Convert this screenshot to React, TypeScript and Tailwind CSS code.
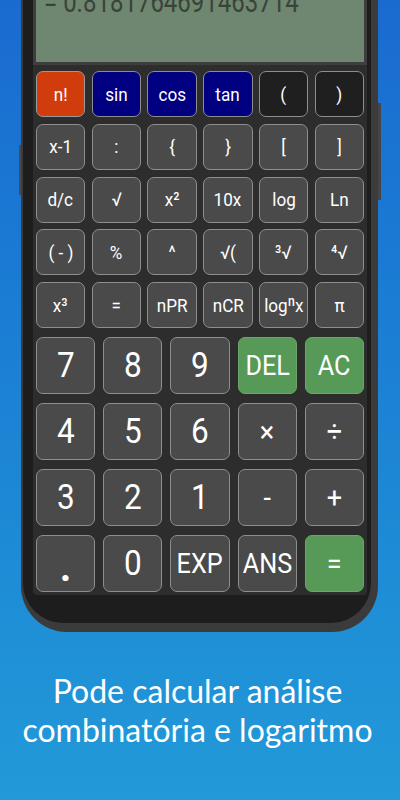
import React from "react";

type Variant = "gray" | "red" | "navy" | "black" | "green";

const variantClass: Record<Variant, string> = {
  gray: "bg-[#4a4a4a] border-[#8e8e8e]",
  red: "bg-[#d03c0c] border-[#9a9a9a]",
  navy: "bg-[#000080] border-[#8e8e8e]",
  black: "bg-[#1f1f1f] border-[#8e8e8e]",
  green: "bg-[#579a57] border-[#6aa86a]",
};

function Key({
  label,
  variant = "gray",
  text = "text-[19px]",
  extra = "",
}: {
  label: React.ReactNode;
  variant?: Variant;
  text?: string;
  extra?: string;
}) {
  return (
    <div
      className={`flex items-center justify-center rounded-[7px] border ${variantClass[variant]} ${extra}`}
    >
      <span className={`${text} leading-none text-white scale-x-[0.9] whitespace-nowrap`}>{label}</span>
    </div>
  );
}

export default function App() {
  const fn: [string, Variant][][] = [
    [
      ["n!", "red"],
      ["sin", "navy"],
      ["cos", "navy"],
      ["tan", "navy"],
      ["(", "black"],
      [")", "black"],
    ],
    [
      ["x-1", "gray"],
      [":", "gray"],
      ["{", "gray"],
      ["}", "gray"],
      ["[", "gray"],
      ["]", "gray"],
    ],
    [
      ["d/c", "gray"],
      ["√", "gray"],
      ["x²", "gray"],
      ["10x", "gray"],
      ["log", "gray"],
      ["Ln", "gray"],
    ],
    [
      ["( - )", "gray"],
      ["%", "gray"],
      ["^", "gray"],
      ["√(", "gray"],
      ["³√", "gray"],
      ["⁴√", "gray"],
    ],
    [
      ["x³", "gray"],
      ["=", "gray"],
      ["nPR", "gray"],
      ["nCR", "gray"],
      ["logⁿx", "gray"],
      ["π", "gray"],
    ],
  ];

  return (
    <div className="w-[400px] h-[800px] overflow-hidden bg-gradient-to-b from-[#1a6bd0] to-[#2299d8] font-['Roboto',sans-serif]">
      <div className="relative ml-[21px] w-[357px] h-[632px] rounded-b-[46px] bg-[#3b3b3b] pl-[2px] pr-[7px] pb-[9px]">
        <div className="absolute left-[-2px] top-[145px] w-[2px] h-[50px] bg-[#4a4a4a]" />
        <div className="absolute right-[-3px] top-[103px] w-[3px] h-[97px] bg-[#454545]" />
        <div className="h-full rounded-b-[40px] bg-[#1d1d1d] pl-[10px] pr-[4px] pb-[28px]">
          <div className="h-full bg-[#2d2d2d] rounded-b-[4px] flex flex-col">
            <div className="h-[65px] border-[3px] border-t-0 border-[#3e3e3e] bg-[#6f8670] overflow-hidden">
              <div className="mt-[-13px] ml-[8px] text-[30px] font-normal text-[#394438] leading-[30px] origin-left scale-x-[0.8] whitespace-nowrap">
                = 0.8181764691463714
              </div>
            </div>
            <div className="px-[3px] pt-[6px] flex flex-col gap-[6.75px]">
              {fn.map((row, i) => (
                <div key={i} className="grid grid-cols-6 gap-[6.4px] h-[46px]">
                  {row.map(([l, v]) => (
                    <Key key={l} label={l} variant={v} />
                  ))}
                </div>
              ))}
            </div>
            <div className="px-[3px] pt-[9px] grid grid-cols-5 gap-x-[8px] gap-y-[9px] auto-rows-[57px]">
              <Key label="7" text="text-[35px]" />
              <Key label="8" text="text-[35px]" />
              <Key label="9" text="text-[35px]" />
              <Key label="DEL" variant="green" text="text-[28px]" />
              <Key label="AC" variant="green" text="text-[28px]" />
              <Key label="4" text="text-[35px]" />
              <Key label="5" text="text-[35px]" />
              <Key label="6" text="text-[35px]" />
              <Key label="×" text="text-[30px]" />
              <Key label="÷" text="text-[30px]" />
              <Key label="3" text="text-[35px]" />
              <Key label="2" text="text-[35px]" />
              <Key label="1" text="text-[35px]" />
              <Key label="-" text="text-[30px]" />
              <Key label="+" text="text-[30px]" />
              <div className="flex items-end justify-center rounded-[7px] border bg-[#4a4a4a] border-[#8e8e8e] pb-[3px]">
                <span className="text-[40px] leading-none text-white font-bold">.</span>
              </div>
              <Key label="0" text="text-[35px]" />
              <Key label="EXP" text="text-[28px]" />
              <Key label="ANS" text="text-[28px]" />
              <Key label="=" variant="green" text="text-[30px]" />
            </div>
          </div>
        </div>
      </div>
      <div className="mt-[39px] pr-[5px] text-center text-white font-['Lato',sans-serif] text-[32px] leading-[39px]">
        Pode calcular análise
        <br />
        combinatória e logaritmo
      </div>
    </div>
  );
}
